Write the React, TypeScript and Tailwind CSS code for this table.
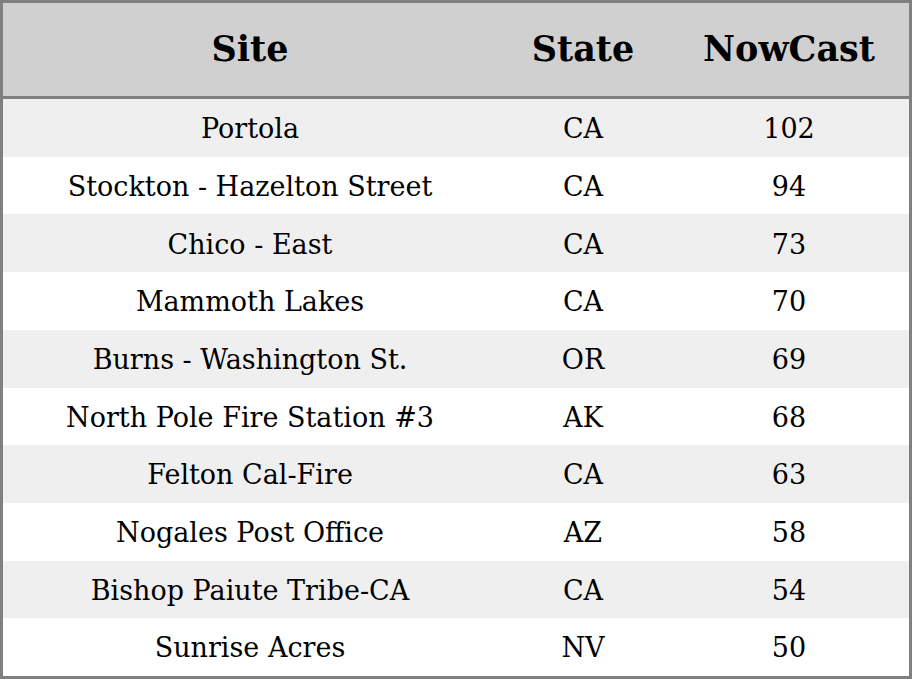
const rows: Array<[string, string, number]> = [
  ['Portola', 'CA', 102],
  ['Stockton - Hazelton Street', 'CA', 94],
  ['Chico - East', 'CA', 73],
  ['Mammoth Lakes', 'CA', 70],
  ['Burns - Washington St.', 'OR', 69],
  ['North Pole Fire Station #3', 'AK', 68],
  ['Felton Cal-Fire', 'CA', 63],
  ['Nogales Post Office', 'AZ', 58],
  ['Bishop Paiute Tribe-CA', 'CA', 54],
  ['Sunrise Acres', 'NV', 50],
]

export default function App() {
  return (
    <div className="flex h-[679px] w-[912px] flex-col border-[3px] border-[#808080] bg-white font-['DejaVu_Serif',serif] text-black">
      <div className="grid h-[96px] shrink-0 grid-cols-[494px_172px_1fr] items-center border-b-[3px] border-[#808080] bg-[#d0d0d0] text-[35px] font-bold">
        <div className="text-center">Site</div>
        <div className="text-center">State</div>
        <div className="text-center">NowCast</div>
      </div>
      {rows.map(([site, state, value], i) => (
        <div
          key={site}
          className={`grid flex-1 grid-cols-[494px_172px_1fr] items-center pt-[3px] text-[27px] ${i % 2 === 0 ? 'bg-[#efefef]' : 'bg-white'}`}
        >
          <div className="text-center">{site}</div>
          <div className="text-center">{state}</div>
          <div className="text-center">{value}</div>
        </div>
      ))}
    </div>
  )
}
